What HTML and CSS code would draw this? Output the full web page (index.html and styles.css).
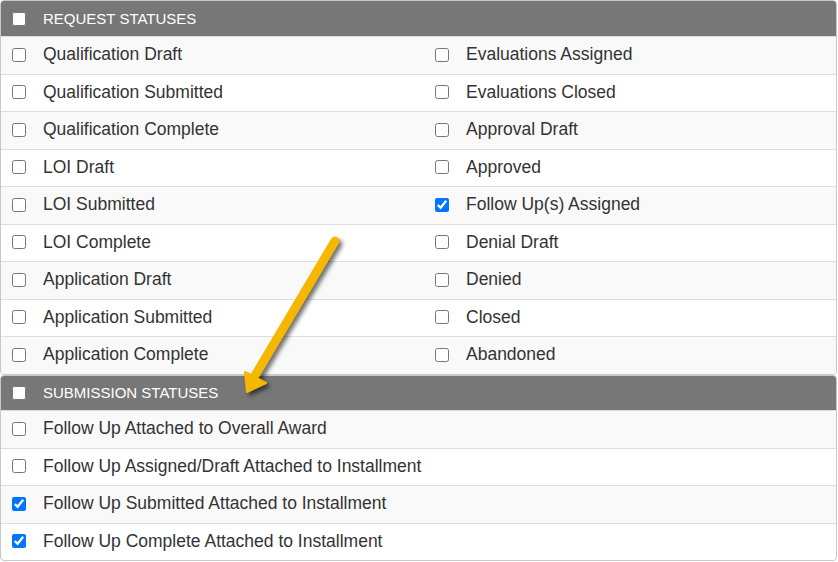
FILE: index.html
```html
<!DOCTYPE html>
<html>
<head>
<meta charset="utf-8">
<link rel="stylesheet" href="styles.css">
</head>
<body>
<div class="wrap">
  <section class="panel">
    <div class="head"><input type="checkbox" class="cb"><span>REQUEST STATUSES</span></div>
    <div class="row"><label class="cell"><input type="checkbox" class="cb">Qualification Draft</label><label class="cell"><input type="checkbox" class="cb">Evaluations Assigned</label></div>
    <div class="row"><label class="cell"><input type="checkbox" class="cb">Qualification Submitted</label><label class="cell"><input type="checkbox" class="cb">Evaluations Closed</label></div>
    <div class="row"><label class="cell"><input type="checkbox" class="cb">Qualification Complete</label><label class="cell"><input type="checkbox" class="cb">Approval Draft</label></div>
    <div class="row"><label class="cell"><input type="checkbox" class="cb">LOI Draft</label><label class="cell"><input type="checkbox" class="cb">Approved</label></div>
    <div class="row"><label class="cell"><input type="checkbox" class="cb">LOI Submitted</label><label class="cell"><input type="checkbox" class="cb" checked>Follow Up(s) Assigned</label></div>
    <div class="row"><label class="cell"><input type="checkbox" class="cb">LOI Complete</label><label class="cell"><input type="checkbox" class="cb">Denial Draft</label></div>
    <div class="row"><label class="cell"><input type="checkbox" class="cb">Application Draft</label><label class="cell"><input type="checkbox" class="cb">Denied</label></div>
    <div class="row"><label class="cell"><input type="checkbox" class="cb">Application Submitted</label><label class="cell"><input type="checkbox" class="cb">Closed</label></div>
    <div class="row"><label class="cell"><input type="checkbox" class="cb">Application Complete</label><label class="cell"><input type="checkbox" class="cb">Abandoned</label></div>
  </section>
  <section class="panel">
    <div class="head"><input type="checkbox" class="cb"><span>SUBMISSION STATUSES</span></div>
    <div class="row single"><label class="cell"><input type="checkbox" class="cb">Follow Up Attached to Overall Award</label></div>
    <div class="row single"><label class="cell"><input type="checkbox" class="cb">Follow Up Assigned/Draft Attached to Installment</label></div>
    <div class="row single"><label class="cell"><input type="checkbox" class="cb" checked>Follow Up Submitted Attached to Installment</label></div>
    <div class="row single"><label class="cell"><input type="checkbox" class="cb" checked>Follow Up Complete Attached to Installment</label></div>
  </section>
  <svg class="arrow" width="838" height="562" viewBox="0 0 838 562">
    <line x1="335" y1="241" x2="256" y2="374" stroke="#f6b700" stroke-width="9" stroke-linecap="round"/>
    <polygon points="247,392 245,372 266,383" fill="#f6b700" stroke="#f6b700" stroke-width="2" stroke-linejoin="round"/>
  </svg>
</div>
</body>
</html>
```
FILE: styles.css
```css
html, body {
  margin: 0;
  padding: 0;
  background: #fff;
}
body {
  font-family: "Liberation Sans", Arial, sans-serif;
  color: #333;
}
.wrap {
  position: relative;
  width: 837px;
}
.panel {
  border: 1px solid #c8c8c8;
  border-radius: 4px;
  overflow: hidden;
}
.head {
  height: 35px;
  background: #777;
  color: #fff;
  font-size: 15px;
  display: flex;
  align-items: center;
  padding-left: 11px;
  gap: 17px;
}
.panel + .panel .head {
  height: 34.5px;
}
.cb {
  width: 14px;
  height: 14px;
  margin: 0;
  flex: none;
}
.row {
  height: 37.5px;
  box-sizing: border-box;
  border-top: 1px solid #dedede;
  display: grid;
  grid-template-columns: 423px 1fr;
  font-size: 17.5px;
}
.row.single {
  grid-template-columns: 1fr;
}
.row:nth-child(even) {
  background: #f9f9f9;
}
.cell {
  display: flex;
  align-items: center;
  gap: 17px;
  padding-left: 11px;
  padding-bottom: 1px;
}
.arrow {
  position: absolute;
  left: 0;
  top: 0;
  pointer-events: none;
  filter: drop-shadow(3px 3px 2px rgba(0,0,0,0.55));
}
```
